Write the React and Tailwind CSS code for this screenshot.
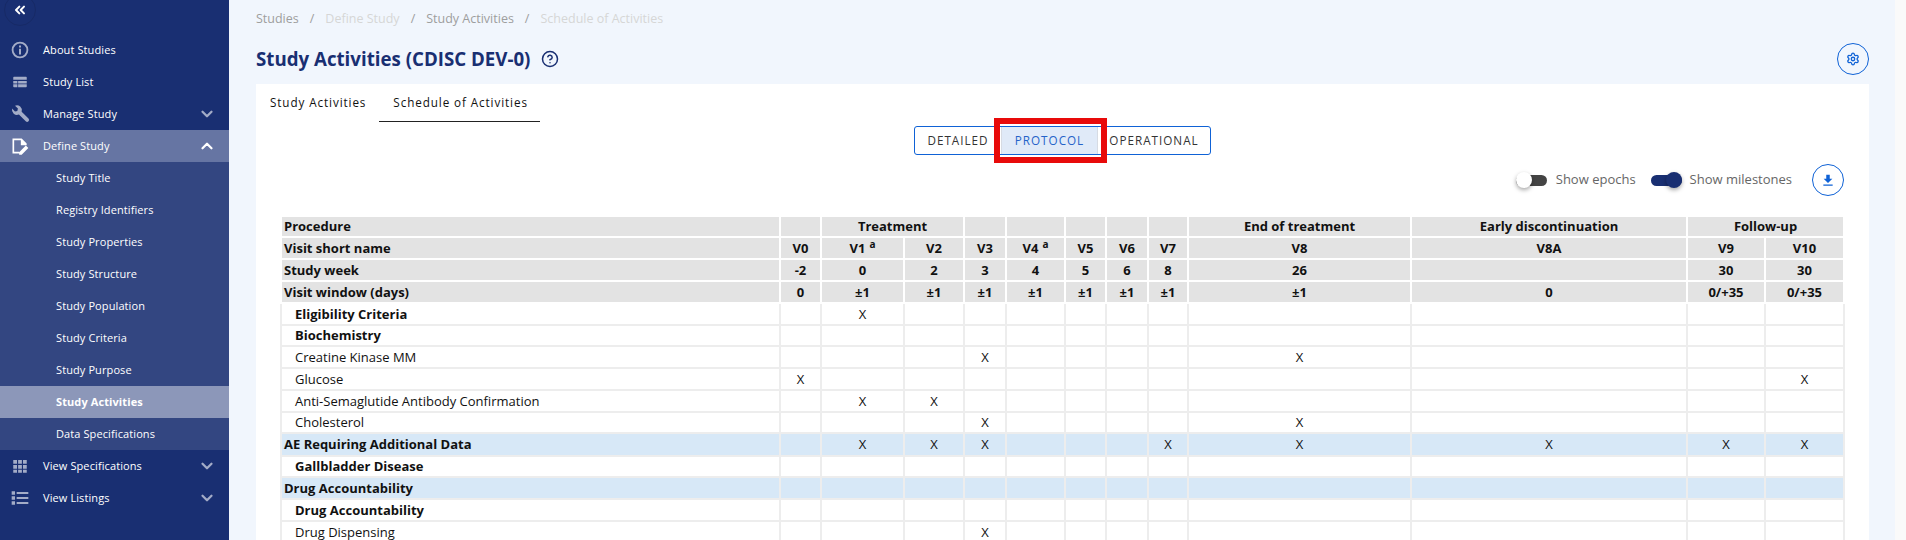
import { ChevronDown, ChevronUp, ChevronsLeft, CircleHelp, Settings } from 'lucide-react';

// column widths in px, first one is the procedure column
const colWidths = [499, 41, 83, 60, 42, 59, 41, 42, 40, 223, 276, 78, 79];

const visits = ['V0', 'V1', 'V2', 'V3', 'V4', 'V5', 'V6', 'V7', 'V8', 'V8A', 'V9', 'V10'];
const weeks = ['-2', '0', '2', '3', '4', '5', '6', '8', '26', '', '30', '30'];
const windows = ['0', '±1', '±1', '±1', '±1', '±1', '±1', '±1', '±1', '0', '0/+35', '0/+35'];

// marks = indexes of the visits with an X
const rows = [
    { name: 'Eligibility Criteria', kind: 'group', marks: [1], h: 'h-[22px]' },
    { name: 'Biochemistry', kind: 'group', marks: [], h: 'h-[21px]' },
    { name: 'Creatine Kinase MM', kind: 'item', marks: [3, 8], h: 'h-[22px]' },
    { name: 'Glucose', kind: 'item', marks: [0, 11], h: 'h-[22px]' },
    { name: 'Anti-Semaglutide Antibody Confirmation', kind: 'item', marks: [1, 2], h: 'h-[22px]' },
    { name: 'Cholesterol', kind: 'item', marks: [3, 8], h: 'h-[21px]' },
    { name: 'AE Requiring Additional Data', kind: 'flow', marks: [1, 2, 3, 7, 8, 9, 10, 11], h: 'h-[23px]' },
    { name: 'Gallbladder Disease', kind: 'group', marks: [], h: 'h-[21px]' },
    { name: 'Drug Accountability', kind: 'flow', marks: [], h: 'h-[22px]' },
    { name: 'Drug Accountability', kind: 'group', marks: [], h: 'h-[22px]' },
    { name: 'Drug Dispensing', kind: 'item', marks: [3], h: 'h-[22px]' },
];

const subItems = [
    'Study Title',
    'Registry Identifiers',
    'Study Properties',
    'Study Structure',
    'Study Population',
    'Study Criteria',
    'Study Purpose',
    'Study Activities',
    'Data Specifications',
];

const InfoIcon = () => (
    <svg viewBox="0 0 24 24" className="w-[20px] h-[20px] fill-current">
        <path d="M10.800 6.500h2.400v2.400h-2.400zm0 4h2.400v7h-2.400zM12 2a10 10 0 100 20 10 10 0 000-20zm0 17.800a7.800 7.800 0 110-15.600 7.800 7.800 0 010 15.600z" />
    </svg>
);

const TableIcon = () => (
    <svg viewBox="0 0 24 24" className="w-[18px] h-[18px] fill-current">
        <path d="M4 5h16a1 1 0 011 1v3H3V6a1 1 0 011-1zm-1 5.500h5.500v3.500H3zm6.500 0H21v3.500H9.500zM3 15h5.500v4H4a1 1 0 01-1-1zm6.500 0H21v3a1 1 0 01-1 1H9.500z" />
    </svg>
);

const WrenchIcon = () => (
    <svg viewBox="0 0 24 24" className="w-[20px] h-[20px] fill-current">
        <path d="M2.500 5.500L6 9l2.800-.7.700-2.800L6 2a6 6 0 018 7.200l8.200 8.200a2.300 2.300 0 01-3.300 3.300l-8.200-8.200a6 6 0 01-8.200-6.900z" />
    </svg>
);

const NoteEditIcon = () => (
    <svg viewBox="0 0 24 24" className="w-[20px] h-[20px] fill-current">
        <path d="M3 3h11l6 6v2h-2V11h-5V5H5v14h6v2H3zm19 11.500l-8 8H11v-3l8-8z" />
    </svg>
);

const GridIcon = () => (
    <svg viewBox="0 0 24 24" className="w-[18px] h-[18px] fill-current">
        <path d="M3 4h5v5H3zm6.500 0h5v5h-5zM16 4h5v5h-5zM3 10.500h5v5H3zm6.500 0h5v5h-5zm6.500 0h5v5h-5zM3 17h5v4H3zm6.500 0h5v4h-5zm6.500 0h5v4h-5z" />
    </svg>
);

const ListIcon = () => (
    <svg viewBox="0 0 24 24" className="w-[20px] h-[20px] fill-current">
        <path d="M2 4h4v4H2zm6 .800h14v2.400H8zM2 10h4v4H2zm6 .800h14v2.400H8zM2 16h4v4H2zm6 .800h14v2.400H8z" />
    </svg>
);

// arrow over a line, the export button
const ExportIcon = () => (
    <svg viewBox="0 0 24 24" className="w-[14px] h-[14px] fill-current">
        <path d="M9 3h6v7h4.500L12 17 4.500 10H9zM4 19.500h16V22H4z" />
    </svg>
);

const NavRow = ({ icon, label, chevron, active }) => (
    <div className={`h-8 flex items-center ${active ? 'bg-[#6675a3]' : ''}`}>
        <span className={`w-[43px] shrink-0 flex justify-center pr-[3px] ${active ? 'text-white' : 'text-[#a3acc7]'}`}>{icon}</span>
        <span className="flex-1 text-[11px] text-white tracking-[0.1px]">{label}</span>
        {chevron === 'down' && <ChevronDown className="w-[18px] h-[18px] mr-[13px] text-[#a3acc7]" strokeWidth={3} />}
        {chevron === 'up' && <ChevronUp className="w-[18px] h-[18px] mr-[13px] text-white" strokeWidth={3} />}
    </div>
);

const Sidebar = () => (
    <aside className="w-[230px] shrink-0 h-[540px] bg-[#192f72] border-r border-[#f1f6fd] overflow-hidden">
        <div className="h-[34px] pl-1 overflow-hidden">
            <div className="w-8 h-8 -mt-1.5 rounded-full border border-[#172a66] flex items-center justify-center text-white">
                <ChevronsLeft className="w-4 h-4" strokeWidth={3} />
            </div>
        </div>
        <NavRow icon={<InfoIcon />} label="About Studies" />
        <NavRow icon={<TableIcon />} label="Study List" />
        <NavRow icon={<WrenchIcon />} label="Manage Study" chevron="down" />
        <NavRow icon={<NoteEditIcon />} label="Define Study" chevron="up" active />
        <div className="bg-[#334681]">
            {subItems.map((item) => (
                <div
                    key={item}
                    className={`h-8 flex items-center pl-[56px] text-[11px] text-white tracking-[0.1px] ${item === 'Study Activities' ? 'bg-[#8c97b9] font-bold' : ''}`}
                >
                    {item}
                </div>
            ))}
        </div>
        <NavRow icon={<GridIcon />} label="View Specifications" chevron="down" />
        <NavRow icon={<ListIcon />} label="View Listings" chevron="down" />
    </aside>
);

const Toggle = ({ on }) => (
    <div className="relative w-[31px] h-4 flex items-center">
        <div className={`w-full h-[11px] rounded-full ${on ? 'bg-[#192f72]' : 'bg-[#444444]'}`}></div>
        <div
            className={`absolute top-0 w-4 h-4 rounded-full shadow-[0_2px_4px_rgba(0,0,0,0.35)] ${on ? 'right-0 bg-[#192f72]' : 'left-0 bg-white'}`}
        ></div>
    </div>
);

const HeadCell = ({ children, span = 1, left }) => (
    <th
        colSpan={span}
        className={`bg-[#e3e3e3] border-2 border-white p-0 text-[13px] font-bold text-[#111111] leading-none ${left ? 'text-left pl-[2px]' : 'text-center'}`}
    >
        {children}
    </th>
);

const Sup = () => <sup className="text-[10px] ml-1 font-bold">a</sup>;

const SoaTable = () => (
    <table className="table-fixed border-collapse w-[1563px]">
        <colgroup>
            {colWidths.map((w, i) => (
                <col key={i} style={{ width: w }} />
            ))}
        </colgroup>
        <thead>
            <tr className="h-[21px]">
                <HeadCell left>Procedure</HeadCell>
                <HeadCell></HeadCell>
                <HeadCell span={2}>Treatment</HeadCell>
                <HeadCell></HeadCell>
                <HeadCell></HeadCell>
                <HeadCell></HeadCell>
                <HeadCell></HeadCell>
                <HeadCell></HeadCell>
                <HeadCell>End of treatment</HeadCell>
                <HeadCell>Early discontinuation</HeadCell>
                <HeadCell span={2}>Follow-up</HeadCell>
            </tr>
            <tr className="h-[22px]">
                <HeadCell left>Visit short name</HeadCell>
                {visits.map((v) => (
                    <HeadCell key={v}>
                        {v}
                        {(v === 'V1' || v === 'V4') && <Sup />}
                    </HeadCell>
                ))}
            </tr>
            <tr className="h-[22px]">
                <HeadCell left>Study week</HeadCell>
                {weeks.map((w, i) => (
                    <HeadCell key={i}>{w}</HeadCell>
                ))}
            </tr>
            <tr className="h-[22px]">
                <HeadCell left>Visit window (days)</HeadCell>
                {windows.map((w, i) => (
                    <HeadCell key={i}>{w}</HeadCell>
                ))}
            </tr>
        </thead>
        <tbody>
            {rows.map((row, r) => (
                <tr key={r} className={`${row.h} ${row.kind === 'flow' ? 'bg-[#d7e8f7]' : ''}`}>
                    <td
                        className={`border-2 border-[#ededed] p-0 text-[13px] leading-none text-[#111111] ${row.kind === 'flow' ? 'pl-[2px] font-bold' : 'pl-[13px]'} ${row.kind === 'group' ? 'font-bold' : ''}`}
                    >
                        {row.name}
                    </td>
                    {visits.map((v, i) => (
                        <td key={v} className="border-2 border-[#ededed] p-0 text-center text-[13px] leading-none text-[#111111]">
                            {row.marks.includes(i) ? 'X' : ''}
                        </td>
                    ))}
                </tr>
            ))}
        </tbody>
    </table>
);

export default function App() {
    return (
        <div className="flex w-[1906px] h-[540px] overflow-hidden bg-[#fafafa] font-['Open_Sans','Noto_Sans',sans-serif]">
            <Sidebar />
            <main className="w-[1665px] shrink-0 h-[540px] bg-[#f1f6fd] pl-[26px] pr-[26px] overflow-hidden">
                {/* breadcrumbs */}
                <div className="h-[38px] flex items-center gap-[11px] text-[12.5px]">
                    <span className="text-[#9e9e9e]">Studies</span>
                    <span className="text-[#9e9e9e]">/</span>
                    <span className="text-[#d6d6d6]">Define Study</span>
                    <span className="text-[#9e9e9e]">/</span>
                    <span className="text-[#9e9e9e]">Study Activities</span>
                    <span className="text-[#9e9e9e]">/</span>
                    <span className="text-[#d6d6d6]">Schedule of Activities</span>
                </div>

                {/* title row */}
                <div className="h-[42px] mb-[4px] flex items-center">
                    <h1 className="text-[18.7px] font-bold text-[#192f72]">Study Activities (CDISC DEV-0)</h1>
                    <CircleHelp className="w-[18px] h-[18px] ml-[11px] text-[#192f72]" strokeWidth={2} />
                    <button className="ml-auto w-8 h-8 rounded-full border border-[#0f62d6] flex items-center justify-center text-[#0f62d6]">
                        <Settings className="w-[14px] h-[14px]" strokeWidth={2.2} />
                    </button>
                </div>

                {/* card */}
                <section className="bg-white h-[456px] pt-0">
                    <div className="flex h-[38px] pl-[1px]">
                        <div className="px-[13px] flex items-center text-[11.7px] tracking-[0.9px] text-[#111111]">Study Activities</div>
                        <div className="pl-[14px] pr-[12px] flex items-center text-[11.7px] tracking-[0.9px] text-[#111111] border-b border-[#222222]">Schedule of Activities</div>
                    </div>

                    {/* view switcher, red box marks the selected one */}
                    <div className="mt-[4px] flex justify-center">
                        <div className="relative flex h-[29px] border border-[#0f62d6] rounded-[3px] text-[11.7px] tracking-[1px]">
                            <div className="w-[86px] flex items-center justify-center text-[#333333]">DETAILED</div>
                            <div className="w-[97px] flex items-center justify-center bg-[#e0eaf8] text-[#2563c9] border-x border-[#d6dbe3]">PROTOCOL</div>
                            <div className="w-[112px] flex items-center justify-center text-[#333333]">OPERATIONAL</div>
                            <div className="absolute left-[79px] -top-[9px] w-[113px] h-[45px] border-[6px] border-[#e80a0a]"></div>
                        </div>
                    </div>

                    {/* toggles */}
                    <div className="mt-[9px] h-8 flex items-center justify-end pr-[25px]">
                        <Toggle />
                        <span className="ml-[9px] text-[13px] text-[#666666]">Show epochs</span>
                        <div className="ml-[15px]">
                            <Toggle on />
                        </div>
                        <span className="ml-[8px] text-[13px] text-[#666666]">Show milestones</span>
                        <button className="ml-[20px] w-8 h-8 rounded-full border border-[#0f62d6] flex items-center justify-center text-[#0f62d6]">
                            <ExportIcon />
                        </button>
                    </div>

                    <div className="mt-[19px] pl-[24px]">
                        <SoaTable />
                    </div>
                </section>
            </main>
        </div>
    );
}
